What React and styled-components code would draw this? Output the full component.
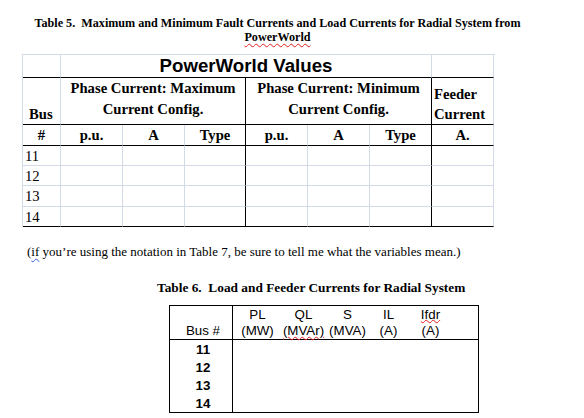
import React from "react";
import styled, { createGlobalStyle } from "styled-components";

const LIGHT = "#d2d9e7";
const DARK = "#000";

const Global = createGlobalStyle`
	body {
		margin: 0;
		background: #fff;
		color: #000;
		font-family: "Liberation Serif", "Times New Roman", serif;
	}
`;

const Page = styled.div`
	width: 584px;
	height: 418px;
	overflow: hidden;
`;

const Caption = styled.div`
	width: ${(p) => p.$width || "auto"};
	margin: ${(p) => p.$margin || 0};
	font-size: ${(p) => p.$size || "12px"};
	line-height: 14px;
	font-weight: 700;
	text-align: ${(p) => p.$align || "left"};
	white-space: pre;
`;

const Squiggle = styled.span`
	text-decoration: underline wavy ${(p) => p.$color || "#e02020"};
	text-decoration-thickness: 1px;
	text-underline-offset: ${(p) => p.$off || "2px"};
`;

/* Table 5 */
const FaultGrid = styled.div`
	display: grid;
	grid-template-columns: 38px 62px 62px 61px 62px 62px 62px 62px;
	grid-template-rows: 23px 47px 21px 20px 20px 21px 20px;
	width: 472px;
	margin: 10px 0 0 22px;
	border-left: 1px solid ${LIGHT};
	border-top: 1px solid ${LIGHT};
`;

const Cell = styled.div`
	box-sizing: border-box;
	grid-column: span ${(p) => p.$span || 1};
	border-right: 1px solid ${(p) => (p.$r ? DARK : LIGHT)};
	border-bottom: 1px solid ${(p) => (p.$b ? DARK : LIGHT)};
	display: flex;
	flex-direction: column;
	justify-content: ${(p) => p.$v || "center"};
	align-items: ${(p) => p.$h || "center"};
	padding: ${(p) => p.$pad || 0};
	font-size: 14.67px;
	line-height: ${(p) => p.$lh || "20px"};
	font-weight: ${(p) => (p.$bold ? 700 : 400)};
	text-align: ${(p) => p.$ta || "center"};
	overflow: hidden;
`;

const BigTitle = styled(Cell)`
	font-family: "Liberation Sans", Arial, sans-serif;
	font-size: 18.67px;
	font-weight: 700;
	line-height: 22px;
`;

const Note = styled.p`
	margin: 17px 0 0 27px;
	font-size: 13px;
	line-height: 15px;
`;

/* Table 6 */
const LoadTable = styled.div`
	width: 310px;
	box-sizing: border-box;
	margin: 10px 0 0 169px;
	border: 1px solid ${DARK};
	font-family: "Liberation Sans", Arial, sans-serif;
	font-size: 13.33px;
	display: grid;
	grid-template-columns: 63px 1fr;
`;

const LoadHead = styled.div`
	box-sizing: border-box;
	height: 34px;
	border-bottom: 1px solid ${DARK};
	border-right: ${(p) => (p.$first ? `1px solid ${DARK}` : "none")};
	display: grid;
	grid-template-columns: ${(p) => p.$cols || "1fr"};
	line-height: 16px;
	padding-top: 1px;
`;

const HeadCol = styled.div`
	text-align: ${(p) => p.$align || "center"};
	align-self: ${(p) => p.$self || "start"};
	padding-right: ${(p) => p.$pr || 0};
	white-space: pre;
`;

const BusCol = styled.div`
	border-right: 1px solid ${DARK};
	display: flex;
	flex-direction: column;
	align-items: center;
	padding-left: 4px;
`;

const BusNum = styled.div`
	height: 18px;
	line-height: 20px;
	font-weight: 700;
`;

const EmptyBody = styled.div`
	height: 72px;
`;

const maxCols = ["p.u.", "A", "Type"];
const rows = ["11", "12", "13", "14"];

function FaultTable() {
	return (
		<FaultGrid>
			<Cell $b />
			<BigTitle $span={6} $b>
				PowerWorld Values
			</BigTitle>
			<Cell $b />

			<Cell $b $bold $v="flex-end" $h="flex-start" $pad="0 0 0 6px">
				Bus
			</Cell>
			<Cell $span={3} $b $r $bold $v="flex-start" $lh="21px">
				Phase Current: Maximum
				<br />
				Current Config.
			</Cell>
			<Cell $span={3} $b $r $bold $v="flex-start" $lh="21px">
				Phase Current: Minimum
				<br />
				Current Config.
			</Cell>
			<Cell $b $bold $v="flex-end" $h="flex-start" $ta="left" $pad="0 0 0 2px">
				<span>Feeder</span>
				<span>Current</span>
			</Cell>

			<Cell $b $bold>#</Cell>
			{maxCols.map((c, i) => (
				<Cell key={"a" + c} $b $r={i === 2} $bold>
					{c}
				</Cell>
			))}
			{maxCols.map((c, i) => (
				<Cell key={"b" + c} $b $r={i === 2} $bold>
					{c}
				</Cell>
			))}
			<Cell $b $bold>A.</Cell>

			{rows.map((n, ri) => {
				const last = ri === rows.length - 1;
				return (
					<React.Fragment key={n}>
						<Cell $b={last} $h="flex-start" $pad="0 0 0 2px">
							{n}
						</Cell>
						{[0, 1, 2, 3, 4, 5, 6].map((c) => (
							<Cell key={c} $b={last} $r={c === 2 || c === 5} />
						))}
					</React.Fragment>
				);
			})}
		</FaultGrid>
	);
}

function LoadCurrents() {
	return (
		<LoadTable>
			<LoadHead $first>
				<HeadCol $align="right" $self="end" $pr="12px">
					Bus #
				</HeadCol>
			</LoadHead>
			<LoadHead $cols="49px 43px 45px 37px 47px 1fr">
				<HeadCol>
					PL
					<br />
					(MW)
				</HeadCol>
				<HeadCol>
					QL
					<br />
					<Squiggle $off="1px">(MVAr)</Squiggle>
				</HeadCol>
				<HeadCol>
					S
					<br />
					(MVA)
				</HeadCol>
				<HeadCol>
					IL
					<br />
					(A)
				</HeadCol>
				<HeadCol>
					<Squiggle $off="0px">Ifdr</Squiggle>
					<br />
					(A)
				</HeadCol>
				<HeadCol />
			</LoadHead>
			<BusCol>
				{rows.map((n) => (
					<BusNum key={n}>{n}</BusNum>
				))}
			</BusCol>
			<EmptyBody />
		</LoadTable>
	);
}

export default function App() {
	return (
		<Page>
			<Global />
			<Caption $width="555px" $align="center" $margin="16px 0 0 0" $size="12.15px">
				{"Table 5.  Maximum and Minimum Fault Currents and Load Currents for Radial System from"}
				<br />
				<Squiggle>PowerWorld</Squiggle>
			</Caption>
			<FaultTable />
			<Note>
				(<Squiggle $color="#3060e0">if</Squiggle> you’re using the notation in Table 7, be sure to tell me what the
				variables mean.)
			</Note>
			<Caption $margin="22px 0 0 157px" $size="13.33px">
				{"Table 6.  Load and Feeder Currents for Radial System"}
			</Caption>
			<LoadCurrents />
		</Page>
	);
}
